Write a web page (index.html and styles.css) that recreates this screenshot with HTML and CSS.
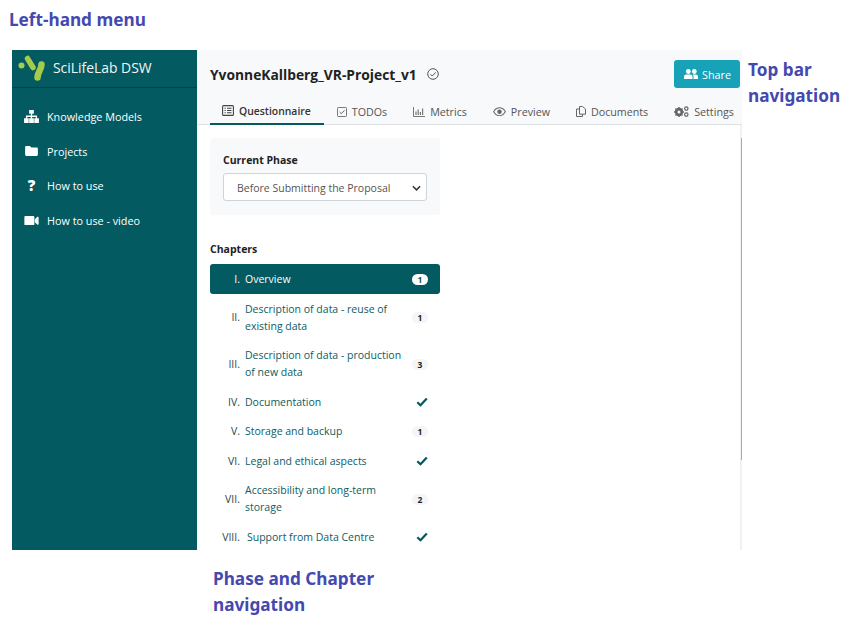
FILE: index.html
```html
<!DOCTYPE html>
<html lang="en">
<head>
  <meta charset="UTF-8" />
  <title>SciLifeLab DSW</title>
  <link rel="stylesheet" href="styles.css">
</head>
<body>
  <h2 class="note note-left">Left-hand menu</h2>

  <div class="row">
    <div class="app">
      <aside class="sidebar">
        <div class="brand">
          <svg class="logo" viewBox="0 0 28 26" width="28" height="26">
            <circle cx="3.5" cy="10.500" r="3" fill="#a4cc4a"/>
            <path d="M9.500 3.500 L15 12.500" stroke="#a4cc4a" stroke-width="5.500" stroke-linecap="round" fill="none"/>
            <path d="M23.500 9.500 C23.500 15 19.500 17 19.500 22.500" stroke="#a4cc4a" stroke-width="6.500" stroke-linecap="round" fill="none"/>
          </svg>
          <span>SciLifeLab DSW</span>
        </div>
        <nav class="menu">
          <a class="menu-item">
            <svg class="menu-icon" viewBox="0 0 16 14" width="15" height="13"><path fill="#fff" d="M5.500 0h5v4H8.700v2H14v3h2v5h-5V9h1.600V7.500H8.700V9H10.500v5h-5V9h1.700V7.500H3.400V9H5v5H0V9h2V6h5.300V4H5.500z"/></svg>
            <span>Knowledge Models</span>
          </a>
          <a class="menu-item">
            <svg class="menu-icon" viewBox="0 0 14 11" width="13" height="10"><path fill="#fff" d="M1.300 0h4l1.500 1.600h5.900c.7 0 1.300.6 1.300 1.300v6.800c0 .7-.6 1.300-1.300 1.300H1.300C.6 11 0 10.400 0 9.700V1.300C0 .6.600 0 1.300 0z"/></svg>
            <span>Projects</span>
          </a>
          <a class="menu-item">
            <span class="menu-icon menu-q">?</span>
            <span>How to use</span>
          </a>
          <a class="menu-item">
            <svg class="menu-icon" viewBox="0 0 15 10" width="14" height="9.500"><path fill="#fff" d="M1.300 0h7.900c.7 0 1.300.6 1.300 1.300v7.400c0 .7-.6 1.300-1.300 1.300H1.300C.6 10 0 9.400 0 8.700V1.300C0 .6.600 0 1.300 0zM11 3.500 13.700.9c.5-.4 1.300-.1 1.300.6v7c0 .7-.8 1-1.300.6L11 6.500z"/></svg>
            <span>How to use - video</span>
          </a>
        </nav>
      </aside>

      <main class="main">
        <header class="topbar">
          <div class="title-row">
            <h1>YvonneKallberg_VR-Project_v1</h1>
            <svg class="saved" viewBox="0 0 12 12" width="12" height="12"><circle cx="6" cy="6" r="5.300" fill="none" stroke="#555" stroke-width="1"/><path d="M3.400 6.200 5.200 8 8.700 4.400" fill="none" stroke="#555" stroke-width="1"/></svg>
            <button class="share">
              <svg viewBox="0 0 14 10" width="14" height="10"><circle cx="4.300" cy="2.500" r="2.400" fill="#fff"/><circle cx="10.300" cy="2.500" r="2.400" fill="#fff"/><path fill="#fff" d="M0 10V7.800C0 6.300 1.200 5.500 2.500 5.500h3.600c1.300 0 2.400.8 2.400 2.300V10zM9.500 10V7.500c0-.8-.3-1.500-.8-2h2.800c1.300 0 2.500.8 2.500 2.300V10z"/></svg>
              Share
            </button>
          </div>
          <nav class="tabs">
            <a class="tab tab-on">
              <svg viewBox="0 0 12 11" width="12" height="11"><rect x=".6" y=".6" width="10.800" height="9.800" rx="1" fill="none" stroke="#444" stroke-width="1.100"/><path d="M2.500 3.300h1.200M5 3.300h4.500M2.500 5.500h1.200M5 5.500h4.500M2.500 7.700h1.200M5 7.700h4.500" stroke="#444" stroke-width="1.100"/></svg>
              Questionnaire
            </a>
            <a class="tab">
              <svg viewBox="0 0 11 11" width="10" height="10"><rect x=".5" y=".5" width="10" height="10" rx="1" fill="none" stroke="#666" stroke-width="1"/><path d="M2.800 5.500 4.700 7.400 8.300 3.600" fill="none" stroke="#666" stroke-width="1.100"/></svg>
              TODOs
            </a>
            <a class="tab">
              <svg viewBox="0 0 12 10" width="12" height="10"><path d="M.5 0v9.500H12" fill="none" stroke="#777" stroke-width="1"/><path d="M3 4.500V8M5.200 2.500V8M7.400 5V8M9.600 1.500V8" stroke="#777" stroke-width="1.200"/></svg>
              Metrics
            </a>
            <a class="tab">
              <svg viewBox="0 0 14 10" width="13" height="9.500"><path d="M.7 5C2.200 2.300 4.400.8 7 .8s4.800 1.500 6.300 4.200C11.800 7.700 9.600 9.200 7 9.200S2.200 7.700.7 5z" fill="none" stroke="#666" stroke-width="1.100"/><circle cx="7" cy="5" r="2.400" fill="#666"/></svg>
              Preview
            </a>
            <a class="tab">
              <svg viewBox="0 0 10 11" width="10" height="11"><path d="M3.500.5h3L9.500 3v5.200h-6zM.5 3h3M.5 3v7.500h6V8.200" fill="none" stroke="#666" stroke-width="1"/></svg>
              Documents
            </a>
            <a class="tab">
              <svg viewBox="0 0 15 11" width="15" height="11"><path d="M5 1v10M0 6h10M1.500 2.500l7 7M8.500 2.500l-7 7" stroke="#666" stroke-width="1.400"/><circle cx="5" cy="6" r="3" fill="none" stroke="#666" stroke-width="2.400"/><circle cx="5" cy="6" r="1.500" fill="#f8f9fa"/><circle cx="12.300" cy="2.600" r="1.700" fill="none" stroke="#666" stroke-width="1.200"/><circle cx="12.300" cy="8.600" r="1.700" fill="none" stroke="#666" stroke-width="1.200"/></svg>
              Settings
            </a>
          </nav>
        </header>

        <div class="content">
          <div class="pane">
            <section class="phase">
              <label class="phase-label" for="phase">Current Phase</label>
              <div class="select">
                <span>Before Submitting the Proposal</span>
                <svg viewBox="0 0 10 6" width="9" height="6"><path d="M1 1l4 4 4-4" fill="none" stroke="#333" stroke-width="1.700"/></svg>
              </div>
            </section>

            <h3 class="chapters-title">Chapters</h3>
            <ul class="chapters">
              <li class="chapter chapter-on"><span class="num">I.</span><span class="name">Overview</span><span class="badge">1</span></li>
              <li class="chapter"><span class="num">II.</span><span class="name">Description of data - reuse of existing data</span><span class="badge">1</span></li>
              <li class="chapter"><span class="num">III.</span><span class="name">Description of data - production of new data</span><span class="badge">3</span></li>
              <li class="chapter"><span class="num">IV.</span><span class="name">Documentation</span><svg class="check" viewBox="0 0 12 10" width="12" height="10"><path d="M1.300 5.200 4.500 8.200 10.800 1.600" fill="none" stroke="#03565c" stroke-width="2.200"/></svg></li>
              <li class="chapter"><span class="num">V.</span><span class="name">Storage and backup</span><span class="badge">1</span></li>
              <li class="chapter"><span class="num">VI.</span><span class="name">Legal and ethical aspects</span><svg class="check" viewBox="0 0 12 10" width="12" height="10"><path d="M1.300 5.200 4.500 8.200 10.800 1.600" fill="none" stroke="#03565c" stroke-width="2.200"/></svg></li>
              <li class="chapter"><span class="num">VII.</span><span class="name">Accessibility and long-term storage</span><span class="badge">2</span></li>
              <li class="chapter"><span class="num">VIII.</span><span class="name name-wide">Support from Data Centre</span><svg class="check" viewBox="0 0 12 10" width="12" height="10"><path d="M1.300 5.200 4.500 8.200 10.800 1.600" fill="none" stroke="#03565c" stroke-width="2.200"/></svg></li>
            </ul>
          </div>
          <div class="scrollbar"><div class="thumb"></div></div>
        </div>
      </main>
    </div>
    <h2 class="note note-right">Top bar<br>navigation</h2>
  </div>

  <h2 class="note note-bottom">Phase and Chapter<br>navigation</h2>
</body>
</html>
```

FILE: styles.css
```css
* {
  box-sizing: border-box;
}

body {
  margin: 0;
  font-family: "Open Sans", "Noto Sans", sans-serif;
  background: #fff;
  color: #333;
  width: 851px;
  height: 624px;
  overflow: hidden;
}

.note {
  margin: 0;
  font-family: "Noto Sans", "Open Sans", sans-serif;
  font-size: 17.200px;
  font-weight: 700;
  line-height: 26px;
  color: #4449b0;
}

.note-left {
  height: 50px;
  padding: 7px 0 0 9px;
}

.note-right {
  margin: 7px 0 0 6px;
}

.note-bottom {
  margin: 16px 0 0 213px;
}

.row {
  display: flex;
  align-items: flex-start;
}

.app {
  display: flex;
  width: 730px;
  height: 500px;
  margin-left: 12px;
  overflow: hidden;
}

/* sidebar */
.sidebar {
  width: 185px;
  flex: none;
  background: #035a60;
  color: #fff;
}

.brand {
  display: flex;
  align-items: center;
  gap: 7px;
  height: 38px;
  padding: 0 0 2px 6px;
  border-bottom: 1px solid #024347;
  font-size: 13.900px;
  color: #f2f6f6;
}

.menu {
  display: flex;
  flex-direction: column;
  padding-top: 11.500px;
}

.menu-item {
  display: flex;
  align-items: center;
  height: 34.500px;
  font-size: 10.800px;
}

.menu-icon {
  width: 15px;
  margin: 0 8px 0 12px;
  flex: none;
  text-align: center;
}

.menu-q {
  font-size: 15px;
  font-weight: 800;
  line-height: 1;
}

/* top bar */
.main {
  flex: 1;
  display: flex;
  flex-direction: column;
  min-width: 0;
}

.topbar {
  height: 75px;
  background: #f8f9fa;
  border-bottom: 1px solid #dee2e6;
}

.title-row {
  display: flex;
  align-items: center;
  height: 48px;
  padding: 0 0 0 13px;
}

h1 {
  margin: 0;
  font-size: 13.800px;
  font-weight: 700;
  color: #222;
}

.saved {
  margin-left: 10px;
}

.share {
  display: flex;
  align-items: center;
  gap: 4px;
  margin-left: auto;
  width: 66px;
  height: 28px;
  margin-right: 2px;
  padding: 0 0 0 10px;
  border: 0;
  border-radius: 3px;
  background: #17a2b8;
  color: #fff;
  font-family: inherit;
  font-size: 10.800px;
}

.tabs {
  display: flex;
  height: 27px;
  padding-left: 13px;
}

.tab {
  display: flex;
  align-items: center;
  gap: 5px;
  padding: 0 13px;
  font-size: 10.700px;
  color: #555;
  white-space: nowrap;
}

.tab-on {
  padding-left: 12px;
  color: #333;
  font-size: 10.400px;
  font-weight: 600;
  border-bottom: 2px solid #035a60;
}

/* questionnaire */
.content {
  flex: 1;
  display: flex;
  justify-content: space-between;
  min-height: 0;
}

.pane {
  padding: 13px 0 0 13px;
}

.scrollbar {
  width: 2px;
  background: #f1f1f1;
  padding-top: 13px;
}

.thumb {
  width: 1px;
  height: 322px;
  margin-left: 1px;
  background: #aaa;
}

.phase {
  width: 230px;
  height: 77px;
  padding: 15px 13px 0;
  background: #f8f9fa;
  border-radius: 3px;
}

.phase-label {
  display: block;
  font-size: 10.500px;
  font-weight: 700;
  color: #222;
}

.select {
  display: flex;
  align-items: center;
  justify-content: space-between;
  height: 28px;
  margin-top: 6px;
  padding: 2px 5px 0 13px;
  background: #fff;
  border: 1px solid #ced4da;
  border-radius: 3px;
  font-size: 10.500px;
  color: #555;
}

.chapters-title {
  margin: 27px 0 8px;
  font-size: 10.500px;
  line-height: 14px;
  font-weight: 700;
  color: #222;
}

.chapters {
  list-style: none;
  margin: 0;
  padding: 0;
  width: 230px;
}

.chapter {
  display: flex;
  align-items: center;
  min-height: 29.500px;
  padding: 7.250px 12px 5.250px 0;
  font-size: 10.500px;
  line-height: 17px;
  color: #0c5d63;
}

.chapter-on {
  background: #035a60;
  border-radius: 3px;
  color: #fff;
}

.num {
  width: 30px;
  flex: none;
  text-align: right;
  color: #2f4548;
}

.chapter-on .num {
  color: #fff;
}

.name {
  flex: 1;
  margin-left: 5px;
  padding-right: 4px;
}

.name-wide {
  margin-left: 7px;
}

.badge {
  flex: none;
  width: 16px;
  height: 11px;
  border-radius: 6px;
  background: #f4f5f6;
  color: #222;
  font-size: 8.500px;
  font-weight: 700;
  line-height: 11px;
  text-align: center;
}

.chapter-on .badge {
  background: #fff;
  color: #035a60;
}

.check {
  flex: none;
  margin-left: 3px;
}
```
